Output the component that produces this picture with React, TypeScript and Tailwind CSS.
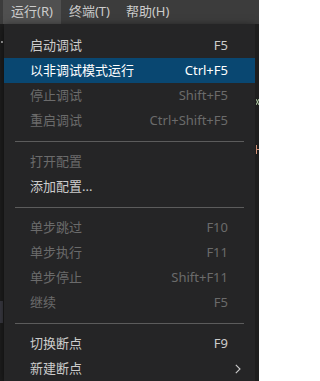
import React from 'react';

type Item =
  | { kind: 'item'; label: string; shortcut?: string; disabled?: boolean; active?: boolean; submenu?: boolean }
  | { kind: 'sep' };

const items: Item[] = [
  { kind: 'item', label: '启动调试', shortcut: 'F5' },
  { kind: 'item', label: '以非调试模式运行', shortcut: 'Ctrl+F5', active: true },
  { kind: 'item', label: '停止调试', shortcut: 'Shift+F5', disabled: true },
  { kind: 'item', label: '重启调试', shortcut: 'Ctrl+Shift+F5', disabled: true },
  { kind: 'sep' },
  { kind: 'item', label: '打开配置', disabled: true },
  { kind: 'item', label: '添加配置...' },
  { kind: 'sep' },
  { kind: 'item', label: '单步跳过', shortcut: 'F10', disabled: true },
  { kind: 'item', label: '单步执行', shortcut: 'F11', disabled: true },
  { kind: 'item', label: '单步停止', shortcut: 'Shift+F11', disabled: true },
  { kind: 'item', label: '继续', shortcut: 'F5', disabled: true },
  { kind: 'sep' },
  { kind: 'item', label: '切换断点', shortcut: 'F9' },
  { kind: 'item', label: '新建断点', submenu: true },
];

const font = { fontFamily: '"Noto Sans", "Noto Sans CJK SC", sans-serif' };

const Chevron = () => (
  <svg width="6" height="10" viewBox="0 0 6 10" fill="none">
    <path d="M0.8 0.8 L5 5 L0.8 9.2" stroke="#cccccc" strokeWidth="1.1" />
  </svg>
);

const MenuRow = ({ item }: { item: Item }) => {
  if (item.kind === 'sep') {
    return (
      <div className="h-[16px] pt-[8px] px-[11px]">
        <div className="h-px bg-[#5c5c5c]" />
      </div>
    );
  }
  const color = item.active ? 'text-white' : item.disabled ? 'text-[#6b6b6b]' : 'text-[#cccccc]';
  return (
    <div
      className={`h-[25px] flex items-center pl-[26px] pr-[14px] text-[13px] ${color} ${
        item.active ? 'bg-[#094771]' : ''
      }`}
    >
      <span className="flex-1 whitespace-nowrap">{item.label}</span>
      {item.shortcut && <span className="whitespace-nowrap">{item.shortcut}</span>}
      <span className="w-[13px] flex justify-end">{item.submenu && <Chevron />}</span>
    </div>
  );
};

export default function App() {
  return (
    <div className="w-[259px] h-[381px] overflow-hidden bg-[#1e1e1e] flex flex-col" style={font}>
      <div className="h-[30px] bg-[#3c3c3c] flex items-stretch pl-[3px] text-[13px] text-[#cccccc]">
        <div className="px-[8px] flex items-center bg-[#505050]">运行(R)</div>
        <div className="px-[8px] flex items-center">终端(T)</div>
        <div className="px-[8px] flex items-center">帮助(H)</div>
      </div>
      <div className="flex-1 flex">
        <div className="w-[4px] bg-[#1e1e1e] flex flex-col">
          <div className="mt-[17px] ml-[1px] w-[2px] h-[2px] bg-[#a0a0a0]" />
          <div className="mt-[258px] w-[3px] h-[22px] bg-[#3a3a42]" />
        </div>
        <div className="w-[251px] bg-[#252526] pt-[9px] shadow-[0_2px_8px_rgba(0,0,0,0.6)]">
          {items.map((item, i) => (
            <MenuRow key={i} item={item} />
          ))}
        </div>
        <div className="flex-1 bg-[#1e1e1e] flex flex-col pl-[1px]">
          {/* cut-off editor glyph fragments peeking past the menu */}
          <svg className="mt-[74px]" width="3" height="9" viewBox="0 0 3 9">
            <path d="M0 1 L3 7 M3 1 L0 7" stroke="#b5cea8" strokeWidth="1" />
          </svg>
          <svg className="mt-[38px]" width="3" height="9" viewBox="0 0 3 9">
            <path d="M0.5 0 V9 M0.5 4.5 H3" stroke="#ce9178" strokeWidth="1" />
          </svg>
        </div>
      </div>
    </div>
  );
}
